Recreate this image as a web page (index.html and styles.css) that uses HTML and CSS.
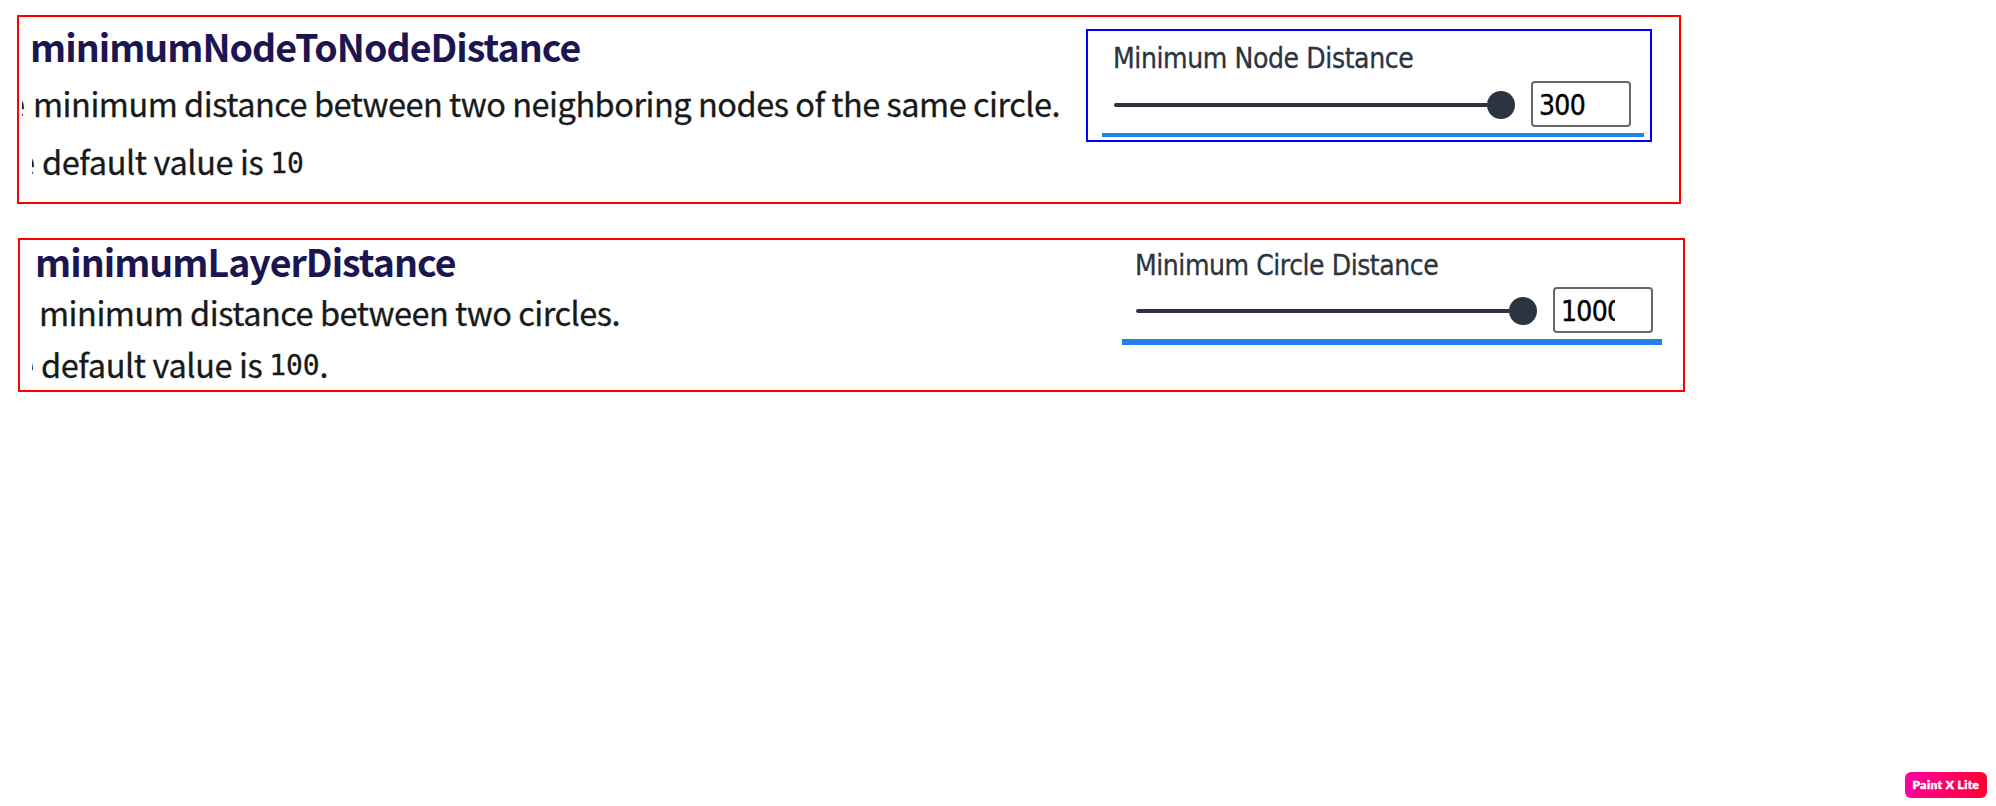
FILE: index.html
```html
<!DOCTYPE html>
<html lang="en">
<head>
<meta charset="utf-8">
<title>Layout distance options</title>
<link rel="stylesheet" href="styles.css">
</head>
<body>
<main class="page">
  <section class="panel panel-node">
    <div class="docs">
      <h2 class="heading">minimumNodeToNodeDistance</h2>
      <p class="line"><span class="cut cut-first">e</span><span>minimum distance between two neighboring nodes of the same circle.</span></p>
      <p class="line"><span class="cut cut-second">e</span><span class="default">default value is</span><code class="code">10</code></p>
    </div>
    <div class="control control-framed">
      <div class="label">Minimum Node Distance</div>
      <div class="row">
        <div class="slider"><span class="track"></span><span class="thumb"></span></div>
        <div class="number"><span class="value">300</span></div>
      </div>
      <div class="underline"></div>
    </div>
  </section>
  <section class="panel panel-layer">
    <div class="docs">
      <h2 class="heading">minimumLayerDistance</h2>
      <p class="line"><span>minimum distance between two circles.</span></p>
      <p class="line"><span class="cut cut-third">e</span><span class="default">default value is</span><code class="code">100</code><span>.</span></p>
    </div>
    <div class="control control-plain">
      <div class="label">Minimum Circle Distance</div>
      <div class="row">
        <div class="slider"><span class="track"></span><span class="thumb"></span></div>
        <div class="number"><span class="value">1000</span></div>
      </div>
      <div class="underline underline-thick"></div>
    </div>
  </section>
  <footer class="footer"><span class="badge">Paint X Lite</span></footer>
</main>
</body>
</html>
```
FILE: styles.css
```css
* { box-sizing: border-box; }
body { margin: 0; background: #fff; }
.page {
  display: flex;
  flex-direction: column;
  width: 1996px;
  height: 806px;
  padding: 15px 9px 8px 17px;
  overflow: hidden;
}
.panel {
  display: flex;
  justify-content: space-between;
  border: 2px solid #f00;
  font-family: "Noto Sans CJK SC", sans-serif;
  white-space: nowrap;
}
.panel-node { width: 1664px; height: 189px; padding: 12px 27px 0 0; }
.panel-layer { width: 1667px; height: 154px; margin: 34px 0 0 1px; padding: 0 21px 0 0; }

.heading { margin: 0; font-size: 37.5px; line-height: 42px; font-weight: 700; letter-spacing: -.96px; color: #1b1552; }
.panel-node .heading { margin-top: -4px; padding-left: 11px; }
.panel-layer .heading { padding-left: 15px; }
.line {
  display: flex;
  height: 58px;
  margin: 0;
  font-size: 32.5px;
  line-height: 58px;
  letter-spacing: -.49px;
  color: #181a1a;
  -webkit-text-stroke: .3px #181a1a;
}
.panel-node .heading + .line { margin-top: 7px; }
.panel-layer .line { height: 51px; line-height: 53px; }
.panel-layer .heading + .line { margin-top: 4px; padding-left: 19px; line-height: 52px; }

.cut { display: flex; justify-content: flex-end; overflow: hidden; letter-spacing: 0; }
.cut-first { width: 3px; margin: 0 8px 0 3px; }
.cut-second { width: 3px; margin: 0 7px 0 13px; }
.cut-third { width: 2px; margin: 0 7px 0 12px; }
.default { letter-spacing: -.4px; }
.code { margin: 3px 0 0 7px; font-family: "DejaVu Sans Mono", monospace; font-size: 28px; letter-spacing: -.1px; }
.panel-layer .code { margin-top: 2px; }

.control { flex-shrink: 0; color: #2b343f; }
.control-framed { width: 566px; height: 113px; border: 2px solid #00f; padding: 0 6px 0 14px; }
.control-plain { width: 540px; }
.label {
  height: 50px;
  font-family: "DejaVu Sans Condensed", "DejaVu Sans", sans-serif;
  font-stretch: condensed;
  font-size: 28px;
  line-height: 56px;
  letter-spacing: -.45px;
  -webkit-text-stroke: .3px #2b343f;
}
.control-framed .label { padding-left: 11px; letter-spacing: -.4px; }
.control-plain .label { height: 47px; line-height: 52px; padding-left: 13px; }
.row { display: flex; align-items: center; gap: 16px; height: 46px; padding-left: 12px; }
.control-plain .row { padding-left: 14px; }
.slider { display: flex; align-items: center; width: 401px; height: 28px; margin-top: 2px; }
.track { flex: 1; height: 4px; border-radius: 2px 0 0 2px; background: #2b343f; }
.thumb { width: 28px; height: 28px; border-radius: 50%; background: #2b343f; }
.number { width: 100px; height: 46px; border: 2px solid #666; border-radius: 4px; padding: 0 36px 0 6px; }
.value {
  display: block;
  overflow: hidden;
  color: #000;
  font-family: "DejaVu Sans Condensed", "DejaVu Sans", sans-serif;
  font-stretch: condensed;
  font-size: 28px;
  line-height: 45px;
  letter-spacing: -.7px;
  -webkit-text-stroke: .4px #000;
}
.underline { height: 4px; margin-top: 6px; background: #1f82f2; }
.underline-thick { height: 6px; }

.footer { display: flex; justify-content: flex-end; margin-top: auto; }
.badge {
  width: 82px;
  height: 26px;
  border-radius: 6px;
  background: linear-gradient(100deg, #ff00a0, #ff0030);
  color: #fff;
  font: 900 12px/25px Lato, sans-serif;
  letter-spacing: .4px;
  -webkit-text-stroke: .5px #fff;
  text-align: center;
  white-space: nowrap;
}
```
